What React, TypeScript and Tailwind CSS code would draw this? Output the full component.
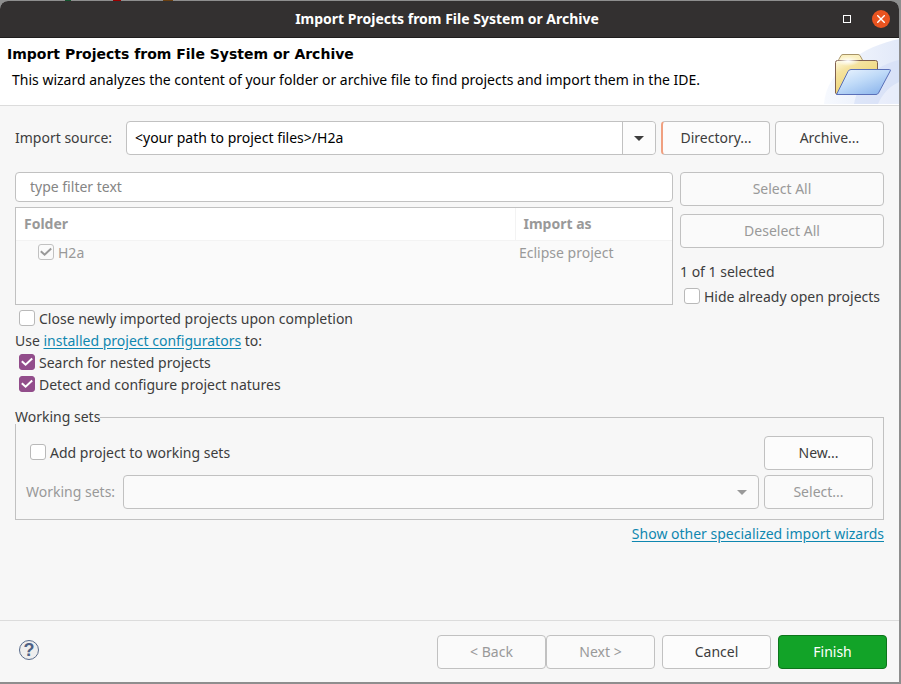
import React from "react";

const BUTTON =
  "h-[34px] w-[109px] shrink-0 rounded border border-[#c1c1c1] bg-[#fcfcfc] text-center text-[#3d3d3d] disabled:bg-[#fafafa] disabled:text-[#999]";

type CheckProps = {
  id: string;
  label: string;
  checked?: boolean;
  disabled?: boolean;
};

function Check({ id, label, checked = false, disabled = false }: CheckProps) {
  return (
    <label htmlFor={id} className={`flex items-center gap-1 whitespace-nowrap ${disabled ? "text-[#999]" : ""}`}>
      <span className="mb-0.5 grid size-4 shrink-0">
        <input
          id={id}
          type="checkbox"
          defaultChecked={checked}
          disabled={disabled}
          className="peer col-start-1 row-start-1 size-4 appearance-none rounded-[3px] border border-[#b9b9b9] bg-white checked:border-[#924d8b] checked:bg-[#924d8b] disabled:border-[#c1c1c1] disabled:bg-[#fafafa]"
        />
        <svg
          viewBox="0 0 16 16"
          className="pointer-events-none col-start-1 row-start-1 size-4 fill-none stroke-white stroke-2 opacity-0 peer-checked:opacity-100 peer-disabled:stroke-[#999]"
        >
          <path d="M2.800 7.200 L6.600 10.700 L13.200 4.600" />
        </svg>
      </span>
      {label}
    </label>
  );
}

function FolderBanner() {
  return (
    <svg viewBox="0 0 75 66" className="h-[66px] w-[75px] shrink-0" aria-hidden="true">
      <defs>
        <linearGradient id="sky" x1="0" y1="0" x2="1" y2="0">
          <stop offset="0" stopColor="#f5f8fe" />
          <stop offset="1" stopColor="#dbe4f7" />
        </linearGradient>
        <linearGradient id="back" x1="0" y1="0" x2="0.6" y2="1">
          <stop offset="0" stopColor="#fffbe4" />
          <stop offset="0.3" stopColor="#f5e3a0" />
          <stop offset="1" stopColor="#ecce62" />
        </linearGradient>
        <linearGradient id="front" x1="0" y1="0" x2="0.8" y2="1">
          <stop offset="0" stopColor="#eef6ff" />
          <stop offset="0.5" stopColor="#bfdaf8" />
          <stop offset="1" stopColor="#8cb5ec" />
        </linearGradient>
        <radialGradient id="shine">
          <stop offset="0" stopColor="#fff" />
          <stop offset="1" stopColor="#fff" stopOpacity="0" />
        </radialGradient>
      </defs>
      <path d="M75 1 C40 8 2 32 0 66 H75 Z" fill="url(#sky)" opacity="0.8" />
      <path d="M75 22 C50 28 34 44 30 66 H75 Z" fill="#cfdbf5" opacity="0.55" />
      <path d="M75 44 C66 48 58 56 54 66 H75 Z" fill="#fff" opacity="0.4" />
      <path d="M14 23 L17 17.5 Q18 16.5 19 16.5 H34 Q35 16.5 36 17.5 L39 23 Z" fill="#fbf0c0" stroke="#a89468" />
      <path d="M11.500 55 V24.5 Q11.500 22.500 13.500 22.500 H51.500 Q53.500 22.500 53.500 24.500 V34 L46 56 H12.500 Z" fill="url(#back)" stroke="#806050" />
      <ellipse cx="24" cy="23" rx="12" ry="5" fill="url(#shine)" />
      <path d="M12.500 56.500 L24 33.500 Q25 31.500 27 31.500 H65.500 Q67 31.500 66.200 33 L54.500 55 Q53.500 56.500 52 56.500 Z" fill="url(#front)" stroke="#5a6fb8" />
    </svg>
  );
}

function Arrow({ className }: { className: string }) {
  return (
    <svg viewBox="0 0 10 5" className={className} aria-hidden="true">
      <path d="M0 0 H10 L5 5 Z" />
    </svg>
  );
}

export default function App() {
  return (
    <div className="flex min-h-screen flex-col bg-[#8e8e8e] pr-0.5 pb-0.5 font-['Noto_Sans','Open_Sans',sans-serif] text-[14px] leading-5 text-[#3d3d3d]">
      <div className="flex h-px gap-[42px] pl-[65px]" aria-hidden="true">
        <span className="w-1.5 bg-[#14532d]" />
        <span className="w-2 bg-[#900]" />
        <span className="w-2.5 bg-[#6b4011]" />
      </div>
      <div className="flex flex-1 flex-col rounded-t-lg bg-[#f7f7f7]">
        <header className="flex h-[37px] items-center rounded-t-lg border-b border-[#1f1d1d] bg-[#333030] pr-[9px] text-white">
          <span className="w-14" />
          <h1 className="flex-1 text-center text-[14px] font-bold">Import Projects from File System or Archive</h1>
          <button aria-label="Maximize" className="grid size-[18px] place-items-center">
            <span className="size-2 border border-white" />
          </button>
          <button aria-label="Close" className="ml-4 grid size-[18px] place-items-center rounded-full bg-[#e95420]">
            <svg viewBox="0 0 8 8" className="size-2 stroke-white" aria-hidden="true">
              <path d="M0.200 0.200 L7.800 7.800 M7.800 0.200 L0.200 7.800" strokeWidth="1.400" />
            </svg>
          </button>
        </header>

        <section className="flex h-[68px] justify-between border-b border-[#dcdcdc] bg-white text-black">
          <div className="pt-1.5 pl-[7px]">
            <h2 className="font-['DejaVu_Sans',sans-serif] text-[14px] font-bold">
              Import Projects from File System or Archive
            </h2>
            <p className="mt-1.5 pl-[5px] whitespace-nowrap">
              This wizard analyzes the content of your folder or archive file to find projects and import them in the IDE.
            </p>
          </div>
          <FolderBanner />
        </section>

        <main className="flex flex-1 flex-col px-[15px] pt-[15px]">
          <div className="flex items-center gap-[5px]">
            <label htmlFor="source" className="w-[106px] shrink-0">Import source:</label>
            <div className="flex h-[34px] flex-1 rounded border border-[#c1c1c1] bg-white">
              <input
                id="source"
                defaultValue="<your path to project files>/H2a"
                className="min-w-0 flex-1 rounded-l bg-transparent px-2 text-black outline-none"
              />
              <button aria-label="Show recent sources" className="grid w-[33px] place-items-center rounded-r border-l border-[#c1c1c1] bg-[#fcfcfc]">
                <Arrow className="h-[5px] w-2.5 fill-[#3d3d3d]" />
              </button>
            </div>
            <button className={`${BUTTON} border-l-2 border-l-[#f0a080]`}>Directory...</button>
            <button className={BUTTON}>Archive...</button>
          </div>

          <div className="mt-[17px] flex gap-[7px]">
            <div className="flex-1">
              <input
                aria-label="Filter folders"
                placeholder="type filter text"
                className="h-[30px] w-full rounded border border-[#c1c1c1] bg-white px-3.5 pb-0.5 outline-none placeholder:text-[#858585]"
              />
              <div className="mt-[5px] h-[98px] border border-[#c1c1c1] bg-[#fafafa] text-[#999]">
                <table className="w-full table-fixed text-left">
                  <thead className="bg-white">
                    <tr className="h-8 border-b border-[#f3f3f3]">
                      <th className="border-r border-[#f3f3f3] pl-2 font-bold">Folder</th>
                      <th className="w-[157px] pl-2 font-bold">Import as</th>
                    </tr>
                  </thead>
                  <tbody>
                    <tr className="h-[26px]">
                      <td className="pl-[22px]">
                        <Check id="h2a" label="H2a" checked disabled />
                      </td>
                      <td className="pl-1">Eclipse project</td>
                    </tr>
                  </tbody>
                </table>
              </div>
            </div>
            <div className="flex w-[204px] flex-col">
              <button disabled className={`${BUTTON} w-full`}>Select All</button>
              <button disabled className={`${BUTTON} mt-2 w-full`}>Deselect All</button>
              <p className="mt-3.5">1 of 1 selected</p>
              <div className="mt-[5px] pl-1">
                <Check id="hide" label="Hide already open projects" />
              </div>
            </div>
          </div>

          <div className="mt-px grid auto-rows-[22px] items-center">
            <div className="pl-1">
              <Check id="close" label="Close newly imported projects upon completion" />
            </div>
            <p>
              Use <a href="#configurators" className="text-[#0f87b0] underline underline-offset-2">installed project configurators</a> to:
            </p>
            <div className="pl-1">
              <Check id="nested" label="Search for nested projects" checked />
            </div>
            <div className="pl-1">
              <Check id="natures" label="Detect and configure project natures" checked />
            </div>
          </div>

          <fieldset className="mt-3.5 border border-[#c1c1c1] px-2.5 pb-2.5">
            <legend className="-ml-[11px] h-3.5 leading-[14px]">Working sets</legend>
            <div className="mt-3 flex items-center justify-between pl-1">
              <Check id="add" label="Add project to working sets" />
              <button className={BUTTON}>New...</button>
            </div>
            <div className="mt-[5px] flex items-center gap-[5px] text-[#999]">
              <label htmlFor="sets" className="w-[92px] shrink-0">Working sets:</label>
              <div className="grid flex-1 items-center">
                <select id="sets" disabled className="col-start-1 row-start-1 h-[34px] w-full appearance-none rounded border border-[#c1c1c1] bg-[#fafafa]" />
                <Arrow className="pointer-events-none col-start-1 row-start-1 mr-3 h-[5px] w-2.5 justify-self-end fill-[#999]" />
              </div>
              <button disabled className={BUTTON}>Select...</button>
            </div>
          </fieldset>
          <a href="#wizards" className="mt-1 self-end text-[#0f87b0] underline underline-offset-2">
            Show other specialized import wizards
          </a>
        </main>

        <footer className="flex h-[62px] items-center gap-[7px] border-t border-[#dcdcdc] pr-3 pl-[19px]">
          <button aria-label="Help" className="mr-auto mb-1 grid size-5 place-items-center rounded-full border border-[#596c8c] bg-[#eee] font-['Liberation_Sans',sans-serif] text-[18px] leading-4 font-bold text-[#4d6185]">
            ?
          </button>
          <div className="flex">
            <button disabled className={BUTTON}>&lt; Back</button>
            <button disabled className={BUTTON}>Next &gt;</button>
          </div>
          <button className={BUTTON}>Cancel</button>
          <button className="h-[34px] w-[109px] rounded border border-[#0c751b] bg-[#12a328] text-center text-white">Finish</button>
        </footer>
      </div>
    </div>
  );
}
